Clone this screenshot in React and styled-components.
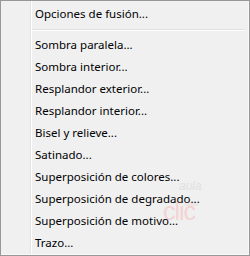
import React from "react";
import styled, {createGlobalStyle} from "styled-components";

const Global = createGlobalStyle`
  html, body {
    margin: 0;
    padding: 0;
    background: #f0f0f0;
  }
`;

const items = [
    "Sombra paralela...",
    "Sombra interior...",
    "Resplandor exterior...",
    "Resplandor interior...",
    "Bisel y relieve...",
    "Satinado...",
    "Superposición de colores...",
    "Superposición de degradado...",
    "Superposición de motivo...",
    "Trazo...",
];

export default function App() {
    return (
        <>
            <Global/>
            <Menu>
                {/* marca de agua, queda detrás del texto */}
                <Watermark>
                    <Aula>aula</Aula>
                    <Com>.com</Com>
                    <Clic>clic</Clic>
                </Watermark>
                <Item>Opciones de fusión...</Item>
                <Separator/>
                {items.map((label, i) => (
                    <Item key={i}>{label}</Item>
                ))}
            </Menu>
        </>
    );
}

const Menu = styled.div`
  position: relative;
  box-sizing: border-box;
  width: 250px;
  height: 256px;
  padding: 2px 2px 0;
  border: 1px solid #979797;
  background-color: #f0f0f0;
  background-image: linear-gradient(to right,
    transparent 29px, #e2e3e3 29px, #e2e3e3 30px,
    #ffffff 30px, #ffffff 31px, transparent 31px);
  box-shadow: inset -1px -1px 0 #f8f8f8;
  overflow: hidden;
  font-family: "Noto Sans", "Open Sans", sans-serif;
  font-size: 11.5px;
  color: #000;
`;

const Item = styled.div`
  height: 22px;
  line-height: 22px;
  padding-left: 32px;
  white-space: nowrap;
  position: relative;
  z-index: 1;
`;

const Separator = styled.div`
  height: 9px;
  margin-left: 29px;
  margin-right: 2px;
  background: linear-gradient(to bottom,
    transparent 4px, #e0e0e0 4px, #e0e0e0 5px,
    #ffffff 5px, #ffffff 6px, transparent 6px);
`;

const Watermark = styled.div`
  position: absolute;
  left: 160px;
  top: 176px;
  width: 45px;
  height: 50px;
  z-index: 0;
  pointer-events: none;
  font-family: "Liberation Sans", sans-serif;
`;

const Aula = styled.span`
  position: absolute;
  left: 18px;
  top: 3px;
  font-size: 12px;
  line-height: 12px;
  font-style: italic;
  color: #e0e0e0;
`;

const Com = styled.span`
  position: absolute;
  left: 22px;
  top: 23px;
  font-size: 7px;
  line-height: 7px;
  color: #efd2d2;
`;

const Clic = styled.span`
  position: absolute;
  left: 2px;
  top: 22px;
  font-size: 25px;
  line-height: 25px;
  color: #f2d4d4;
  letter-spacing: -1px;
`;
